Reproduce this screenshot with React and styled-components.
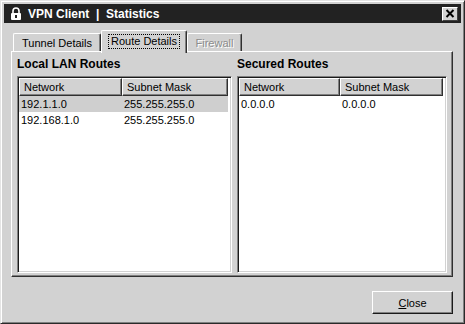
import React from 'react';
import styled, { createGlobalStyle } from 'styled-components';

const GlobalStyle = createGlobalStyle`
    html, body {
        margin: 0;
        padding: 0;
        background: #d2d2d2;
    }
    * {
        box-sizing: border-box;
    }
`;

const Window = styled.div`
    width: 465px;
    height: 324px;
    padding: 3px;
    background: #d2d2d2;
    font-family: 'Liberation Sans', Arial, sans-serif;
    font-size: 11px;
    color: #000;
    border: 1px solid #2a2a2a;
    border-top-color: #e4e4e4;
    border-left-color: #e4e4e4;
    box-shadow: inset 1px 1px 0 #fff, inset -1px -1px 0 #808080;
    display: flex;
    flex-direction: column;
`;

const TitleBar = styled.div`
    height: 19px;
    background: #222;
    color: #fff;
    display: flex;
    align-items: center;
    padding: 0 3px 0 6px;
    font-weight: bold;
    font-size: 12px;
    gap: 6px;

    .title {
        flex: 1;
        white-space: pre;
    }
`;

const CloseBox = styled.div`
    width: 16px;
    height: 14px;
    background: #d2d2d2;
    border: 1px solid;
    border-color: #fff #404040 #404040 #fff;
    display: flex;
    align-items: center;
    justify-content: center;
`;

const Body = styled.div`
    flex: 1;
    padding: 7px 8px 0 7px;
    display: flex;
    flex-direction: column;
`;

const TabRow = styled.div`
    display: flex;
    align-items: flex-end;
    height: 21px;
    padding-left: 2px;
    position: relative;
    z-index: 1;
`;

const Tab = styled.div`
    width: ${(p) => p.$width}px;
    height: ${(p) => (p.$active ? 23 : 18)}px;
    margin-bottom: ${(p) => (p.$active ? -2 : 0)}px;
    background: #d2d2d2;
    border-top: 1px solid #fff;
    border-left: 1px solid #fff;
    border-right: 1px solid #303030;
    border-radius: 2px 2px 0 0;
    box-shadow: inset -1px 0 0 #808080;
    display: flex;
    justify-content: center;
    padding-top: ${(p) => (p.$active ? 3 : 2)}px;
    font-size: 11px;
    color: ${(p) => (p.$disabled ? '#8c8c8c' : '#000')};
    text-shadow: ${(p) => (p.$disabled ? '1px 1px 0 #fff' : 'none')};

    span {
        height: 15px;
        padding: 0 2px;
        border: 1px dotted ${(p) => (p.$active ? '#000' : 'transparent')};
        line-height: 13px;
    }
`;

const Panel = styled.div`
    height: 226px;
    border-top: 1px solid #fff;
    border-left: 1px solid #fff;
    border-right: 1px solid #303030;
    border-bottom: 1px solid #303030;
    box-shadow: inset -1px -1px 0 #808080;
    padding: 5px 6px 3px 5px;
    display: grid;
    grid-template-columns: 215px 210px;
    column-gap: 5px;
`;

const Group = styled.div`
    display: flex;
    flex-direction: column;
`;

const Heading = styled.div`
    font-weight: bold;
    font-size: 12px;
    line-height: 15px;
    height: 15px;
    margin-bottom: 4px;
`;

const ListBox = styled.div`
    height: 197px;
    background: #fff;
    border: 1px solid;
    border-color: #808080 #fff #fff #808080;
    box-shadow: inset 1px 1px 0 #1a1a1a, inset -1px -1px 0 #d2d2d2;
    padding: 1px;
`;

const HeaderRow = styled.div`
    display: grid;
    grid-template-columns: ${(p) => p.$cols};
    margin-right: 2px;
`;

const HeaderCell = styled.div`
    height: 18px;
    background: #d2d2d2;
    border: 1px solid;
    border-color: #fff #303030 #303030 #fff;
    box-shadow: inset -1px -1px 0 #808080;
    padding: 1px 0 0 4px;
    font-size: 11px;
    line-height: 15px;
`;

const Row = styled.div`
    display: grid;
    grid-template-columns: ${(p) => p.$cols};
    height: 16px;
    line-height: 16px;
    font-size: 11px;
    background: ${(p) => (p.$selected ? '#cfcfcf' : 'transparent')};
    margin-right: 2px;

    div {
        padding-left: 2px;
    }
`;

const Footer = styled.div`
    display: flex;
    justify-content: flex-end;
    padding-top: 14px;
`;

const Button = styled.div`
    width: 81px;
    height: 23px;
    border: 1px solid;
    border-color: #fff #1a1a1a #1a1a1a #fff;
    box-shadow: inset -1px -1px 0 #808080;
    display: flex;
    align-items: center;
    justify-content: center;
    font-size: 11px;

    u {
        text-decoration: underline;
    }
`;

const VpnIcon = () => (
    <svg width="12" height="14" viewBox="0 0 12 14">
        <path d="M3 6 V4 a3 3 0 0 1 6 0 V6" fill="none" stroke="#fff" strokeWidth="1.6" />
        <rect x="1" y="6" width="10" height="7" rx="1" fill="#fff" />
        <rect x="5" y="8" width="2" height="3" fill="#222" />
    </svg>
);

const routes = {
    local: [
        { network: '192.1.1.0', mask: '255.255.255.0', selected: true },
        { network: '192.168.1.0', mask: '255.255.255.0' },
    ],
    secured: [{ network: '0.0.0.0', mask: '0.0.0.0' }],
};

const RouteList = ({ title, rows, cols }) => (
    <Group>
        <Heading>{title}</Heading>
        <ListBox>
            <HeaderRow $cols={cols}>
                <HeaderCell>Network</HeaderCell>
                <HeaderCell>Subnet Mask</HeaderCell>
            </HeaderRow>
            {rows.map((r) => (
                <Row key={r.network} $cols={cols} $selected={r.selected}>
                    <div>{r.network}</div>
                    <div>{r.mask}</div>
                </Row>
            ))}
        </ListBox>
    </Group>
);

export default function App() {
    return (
        <>
            <GlobalStyle />
            <Window>
                <TitleBar>
                    <VpnIcon />
                    <span className='title'>VPN Client  |  Statistics</span>
                    <CloseBox>
                        <svg width="10" height="9" viewBox="0 0 10 9">
                            <path d="M1.5 1 L8.5 8 M8.5 1 L1.5 8" stroke="#000" strokeWidth="2" />
                        </svg>
                    </CloseBox>
                </TitleBar>
                <Body>
                    <TabRow>
                        <Tab $width={88}><span>Tunnel Details</span></Tab>
                        <Tab $width={86} $active><span>Route Details</span></Tab>
                        <Tab $width={55} $disabled><span>Firewall</span></Tab>
                    </TabRow>
                    <Panel>
                        <RouteList title='Local LAN Routes' rows={routes.local} cols='103px 1fr' />
                        <RouteList title='Secured Routes' rows={routes.secured} cols='101px 1fr' />
                    </Panel>
                    <Footer>
                        <Button><span><u>C</u>lose</span></Button>
                    </Footer>
                </Body>
            </Window>
        </>
    );
}
